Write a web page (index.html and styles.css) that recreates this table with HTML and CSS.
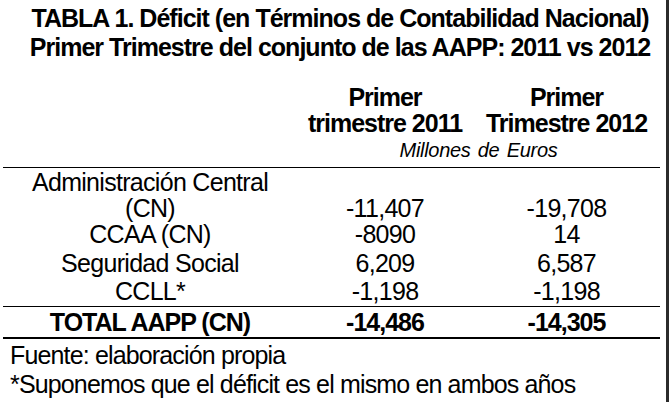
FILE: index.html
```html
<!DOCTYPE html>
<html lang="es">
<head>
<meta charset="utf-8">
<title>Tabla 1</title>
<link rel="stylesheet" href="styles.css">
</head>
<body>
<div class="frame">
  <div class="sheet">
    <div class="title">
      <div>TABLA 1. Déficit (en Términos de Contabilidad Nacional)</div>
      <div>Primer Trimestre del conjunto de las AAPP: 2011 vs 2012</div>
    </div>
    <div class="grid head">
      <div></div>
      <div class="hcell">Primer<br>trimestre 2011</div>
      <div class="hcell">Primer<br>Trimestre 2012</div>
    </div>
    <div class="grid units">
      <div></div>
      <div class="unit">Millones de Euros</div>
    </div>
    <div class="body">
      <div class="grid row r-admin">
        <div class="label">Administración Central</div>
      </div>
      <div class="grid row r-cn">
        <div class="label">(CN)</div>
        <div class="val">-11,407</div>
        <div class="val">-19,708</div>
      </div>
      <div class="grid row r-ccaa">
        <div class="label">CCAA (CN)</div>
        <div class="val">-8090</div>
        <div class="val">14</div>
      </div>
      <div class="grid row r-ss">
        <div class="label">Seguridad Social</div>
        <div class="val">6,209</div>
        <div class="val">6,587</div>
      </div>
      <div class="grid row r-ccll">
        <div class="label">CCLL*</div>
        <div class="val">-1,198</div>
        <div class="val">-1,198</div>
      </div>
    </div>
    <div class="grid row total">
      <div class="label">TOTAL AAPP (CN)</div>
      <div class="val">-14,486</div>
      <div class="val">-14,305</div>
    </div>
    <div class="notes">
      <div>Fuente: elaboración propia</div>
      <div>*Suponemos que el déficit es el mismo en ambos años</div>
    </div>
  </div>
</div>
</body>
</html>
```

FILE: styles.css
```css
html, body {
  margin: 0;
  padding: 0;
  background: #fff;
}
body {
  font-family: "Liberation Sans", Arial, sans-serif;
  color: #000;
}
.frame {
  width: 666px;
  height: 402px;
  border-right: 3px solid #2b2b2b;
  overflow: hidden;
}
.sheet {
  margin-left: 3px;
  width: 657px;
}
.title {
  padding-top: 4px;
  padding-left: 17px;
  font-weight: bold;
  font-size: 25px;
  letter-spacing: -0.98px;
  line-height: 29px;
  text-align: center;
}
.grid {
  display: grid;
  grid-template-columns: 294px 176px 187px;
}
.head {
  margin-top: 22px;
  font-weight: bold;
  font-size: 25px;
  letter-spacing: -1px;
  line-height: 26px;
  text-align: center;
}
.units {
  padding-bottom: 5px;
  border-bottom: 1px solid #000;
}
.unit {
  grid-column: 2 / 4;
  font-style: italic;
  font-size: 20px;
  letter-spacing: -0.3px;
  word-spacing: 2px;
  line-height: 24px;
  padding-top: 2px;
  text-align: center;
}
.body {
  padding-top: 1px;
  border-bottom: 1px solid #000;
}
.row {
  font-size: 25px;
  letter-spacing: -0.7px;
  text-align: center;
}
.r-admin { line-height: 26px; }
.r-cn { line-height: 26px; }
.r-ccaa { line-height: 26px; }
.r-ss { line-height: 26px; margin-top: 3px; }
.r-ccll { line-height: 26px; margin-top: 2px; padding-bottom: 2px; }
.total {
  font-weight: bold;
  letter-spacing: -1px;
  line-height: 28px;
  padding-top: 1px;
  padding-bottom: 1px;
  border-bottom: 2px solid #000;
}
.notes {
  padding-left: 7px;
  font-size: 25px;
  letter-spacing: -0.85px;
  line-height: 29px;
  padding-top: 2px;
}
```
